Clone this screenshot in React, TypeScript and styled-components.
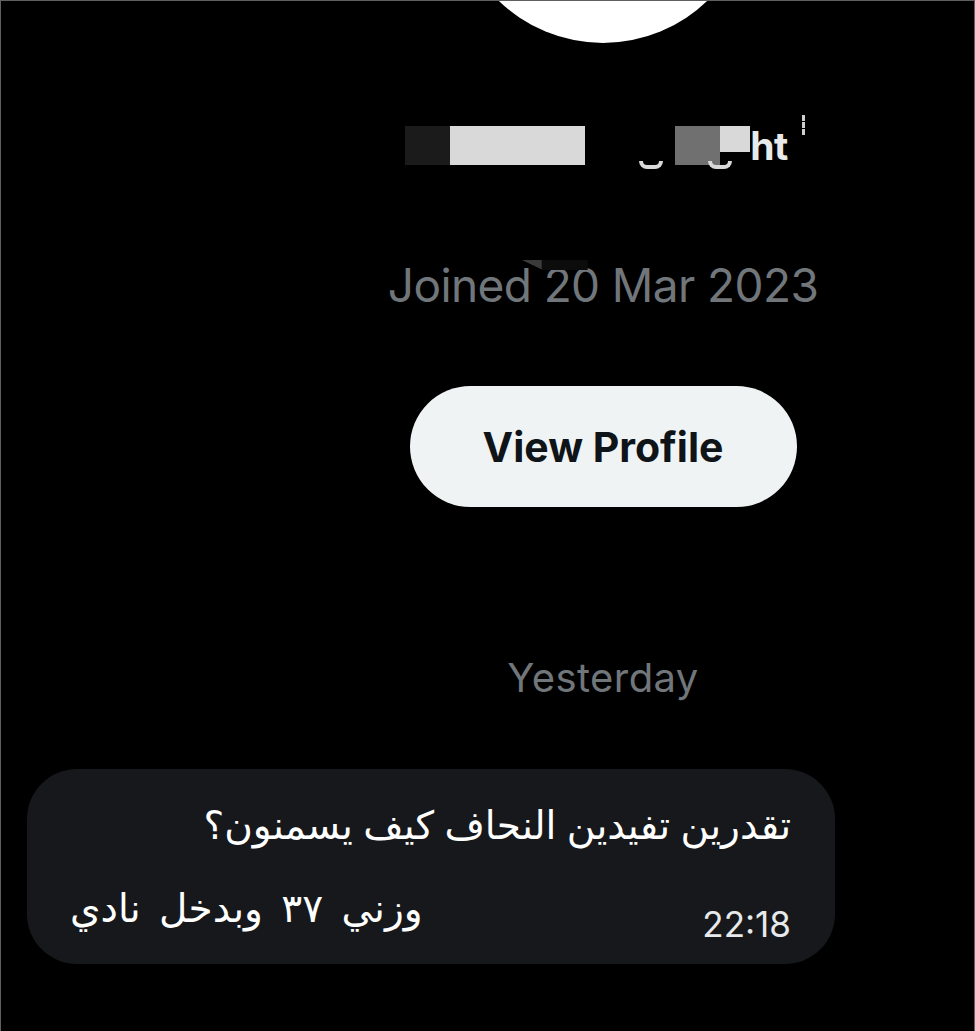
import React from 'react';
import styled, { createGlobalStyle } from 'styled-components';

const GlobalStyle = createGlobalStyle`
  html, body {
    margin: 0;
    padding: 0;
    background: #000;
  }
  body {
    font-family: Inter, "Liberation Sans", sans-serif;
    color: #e7e9ea;
  }
`;

type Segment = { width: number; color: string; height?: number };

const redaction: Segment[] = [
  { width: 45, color: '#1b1b1b' },
  { width: 135, color: '#d9d9d9' },
  { width: 90, color: '#000000' },
  { width: 45, color: '#707070' },
  { width: 30, color: '#d9d9d9', height: 26 },
];

const App: React.FC = () => {
  return (
    <>
      <GlobalStyle />
      <S.Frame>
        <S.Profile>
          <S.Avatar />
          <S.NameRow>
            <S.Redaction>
              {redaction.map((seg, i) => (
                <S.Block key={i} $width={seg.width} $color={seg.color} $height={seg.height ?? 39} />
              ))}
              <S.Tail $left={234} />
              <S.Tail $left={303} />
            </S.Redaction>
            <S.Name>ht</S.Name>
            <S.Marks />
          </S.NameRow>
          <S.Joined>
            Joined 20 Mar 2023
            <S.Glitch />
          </S.Joined>
          <S.ViewButton type="button">View Profile</S.ViewButton>
        </S.Profile>

        <S.DayLabel>Yesterday</S.DayLabel>

        <S.Bubble>
          <S.Line dir="rtl">تقدرين تفيدين النحاف كيف يسمنون؟</S.Line>
          <S.LastRow>
            <S.LastText dir="rtl">وزني ٣٧ وبدخل نادي</S.LastText>
            <S.Time>22:18</S.Time>
          </S.LastRow>
        </S.Bubble>
      </S.Frame>
    </>
  );
};

const arabic = `"DejaVu Sans", sans-serif`;

const S = {
  Frame: styled.div`
    min-height: 1031px;
    box-sizing: border-box;
    border: 1px solid #606060;
    border-bottom: none;
    overflow: hidden;
    background: #000;
  `,
  Profile: styled.section`
    display: flex;
    flex-direction: column;
    align-items: center;
    padding-left: 231px;
  `,
  Avatar: styled.div`
    width: 300px;
    height: 300px;
    margin-top: -258px;
    border-radius: 50%;
    background: #ffffff;
  `,
  NameRow: styled.div`
    position: relative;
    display: flex;
    align-items: flex-start;
    height: 40px;
    margin-top: 83px;
    padding-left: 4px;
  `,
  Redaction: styled.div`
    position: relative;
    display: flex;
    align-items: flex-start;
  `,
  Block: styled.span<{ $width: number; $color: string; $height: number }>`
    display: block;
    width: ${(p) => p.$width}px;
    height: ${(p) => p.$height}px;
    background: ${(p) => p.$color};
  `,
  Tail: styled.span<{ $left: number }>`
    position: absolute;
    left: ${(p) => p.$left}px;
    top: 35px;
    width: 24px;
    height: 8px;
    border: 4px solid #d9d9d9;
    border-top: none;
    border-radius: 0 0 12px 12px;
    box-sizing: border-box;
  `,
  Name: styled.span`
    font-size: 39px;
    font-weight: 700;
    line-height: 1;
    letter-spacing: -0.5px;
    color: #e7e9ea;
  `,
  Marks: styled.span`
    width: 0;
    height: 20px;
    margin-left: 14px;
    margin-top: -11px;
    border-left: 3px dashed #cfcfcf;
  `,
  Joined: styled.div`
    position: relative;
    margin-top: 96px;
    font-size: 46px;
    letter-spacing: -0.6px;
    line-height: 1;
    color: #71767b;
    white-space: nowrap;
  `,
  Glitch: styled.span`
    position: absolute;
    left: 134px;
    top: -2px;
    width: 66px;
    height: 10px;
    background: #0c0c0c;
    clip-path: polygon(0 0, 100% 0, 100% 100%, 32% 100%);
    &::before {
      content: '';
      position: absolute;
      left: 0;
      top: 0;
      width: 20px;
      height: 10px;
      background: #3a3a3a;
      clip-path: polygon(0 0, 100% 0, 100% 100%);
    }
  `,
  ViewButton: styled.button`
    margin-top: 78px;
    width: 387px;
    height: 121px;
    border: none;
    border-radius: 61px;
    background: #eff3f4;
    color: #0f1419;
    font-family: Inter, "Liberation Sans", sans-serif;
    font-size: 41px;
    font-weight: 700;
    cursor: pointer;
  `,
  DayLabel: styled.div`
    margin-top: 151px;
    padding-left: 231px;
    text-align: center;
    font-size: 40px;
    letter-spacing: 0.4px;
    line-height: 1;
    color: #71767b;
  `,
  Bubble: styled.div`
    margin: 71px 0 0 26px;
    width: 808px;
    height: 195px;
    box-sizing: border-box;
    padding: 16px 44px 0 43px;
    border-radius: 50px;
    background: #16181c;
    display: flex;
    flex-direction: column;
  `,
  Line: styled.div`
    font-family: ${arabic};
    font-size: 39px;
    word-spacing: -2px;
    line-height: 82px;
    color: #ffffff;
    text-align: right;
  `,
  LastRow: styled.div`
    display: flex;
    justify-content: space-between;
    align-items: flex-end;
  `,
  LastText: styled.div`
    font-family: ${arabic};
    font-size: 39px;
    word-spacing: 6px;
    line-height: 84px;
    color: #ffffff;
  `,
  Time: styled.span`
    font-size: 35px;
    line-height: 1;
    margin-bottom: 9px;
    color: #e7e9ea;
  `,
};

export default App;
